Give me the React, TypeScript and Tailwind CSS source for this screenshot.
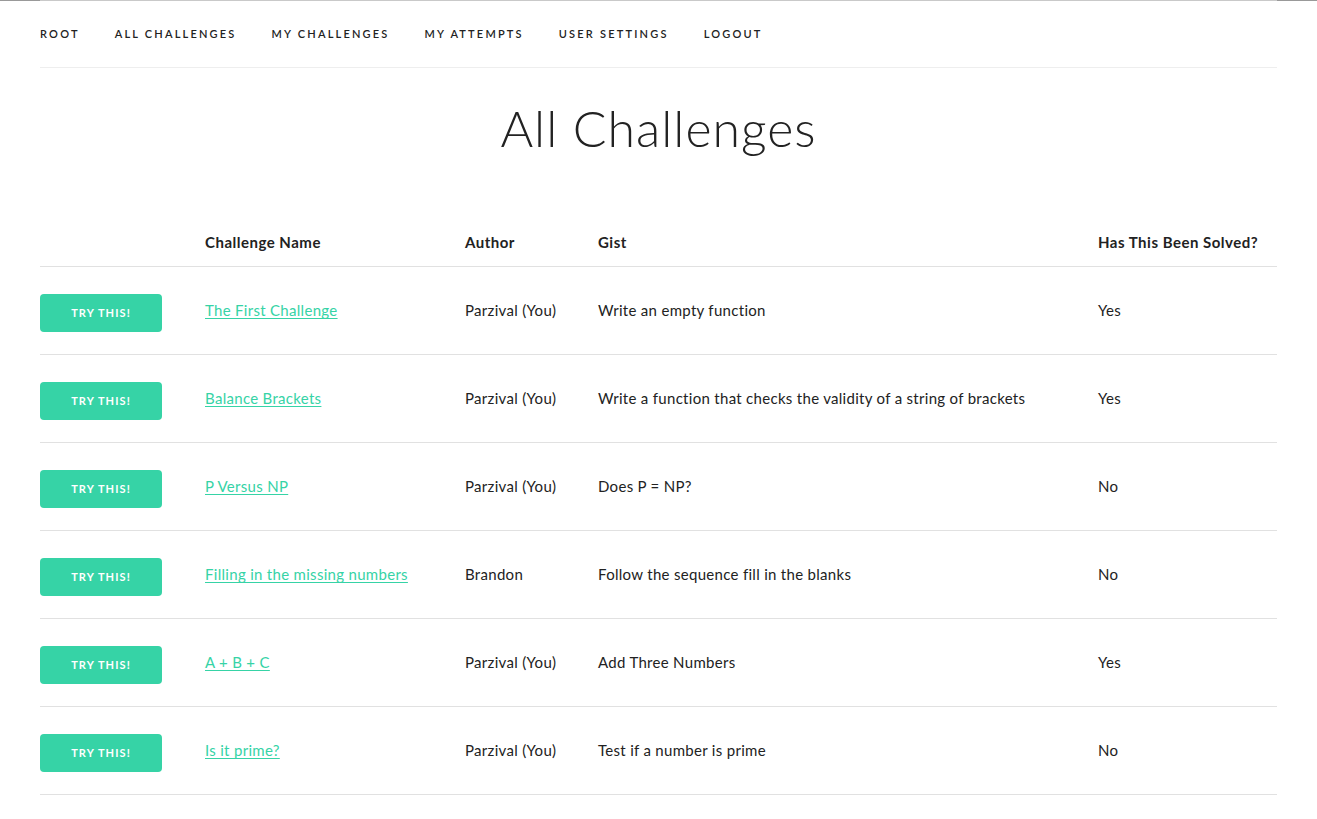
import React from 'react';

interface Challenge {
    id: number;
    name: string;
    author: string;
    gist: string;
    solved: boolean;
}

const challenges: Challenge[] = [
    { id: 1, name: 'The First Challenge', author: 'Parzival (You)', gist: 'Write an empty function', solved: true },
    { id: 2, name: 'Balance Brackets', author: 'Parzival (You)', gist: 'Write a function that checks the validity of a string of brackets', solved: true },
    { id: 3, name: 'P Versus NP', author: 'Parzival (You)', gist: 'Does P = NP?', solved: false },
    { id: 4, name: 'Filling in the missing numbers', author: 'Brandon', gist: 'Follow the sequence fill in the blanks', solved: false },
    { id: 5, name: 'A + B + C', author: 'Parzival (You)', gist: 'Add Three Numbers', solved: true },
    { id: 6, name: 'Is it prime?', author: 'Parzival (You)', gist: 'Test if a number is prime', solved: false },
];

const navLinks = ['Root', 'All Challenges', 'My Challenges', 'My Attempts', 'User Settings', 'Logout'];

const gridCols = 'grid grid-cols-[150px_260px_133px_500px_1fr]';

const App: React.FC = () => {
    return (
        <div className="min-h-[819px] bg-white text-[#222] font-['Lato','Liberation_Sans',sans-serif]">
            <div className="flex h-px">
                <div className="w-[40px] bg-[#999]" />
                <div className="flex-1 bg-[#c9c9c9]" />
                <div className="w-[40px] bg-[#999]" />
            </div>

            <div className="px-[40px]">
                <nav className="flex h-[67px] items-center gap-[35px] border-b border-[#eee]">
                    {navLinks.map((link) => (
                        <a key={link} href="#" className="text-[11px] font-semibold uppercase tracking-[0.2em] text-[#222]">
                            {link}
                        </a>
                    ))}
                </nav>

                <h1 className="pt-[30px] pb-[60px] text-center text-[50px] font-light leading-[60px] tracking-[1px]">
                    All Challenges
                </h1>

                <div>
                    <div className={`${gridCols} h-[49px] items-center border-b border-[#e1e1e1] text-[15px] font-bold tracking-[0.5px]`}>
                        <div />
                        <div className="pl-[15px]">Challenge Name</div>
                        <div className="pl-[15px]">Author</div>
                        <div className="pl-[15px]">Gist</div>
                        <div className="pl-[15px]">Has This Been Solved?</div>
                    </div>
                    {challenges.map((c) => (
                        <div key={c.id} className={`${gridCols} h-[88px] items-center border-b border-[#e1e1e1] text-[15px] tracking-[0.3px]`}>
                            <div>
                                <button className="mt-[5px] h-[38px] w-[122px] rounded-[4px] bg-[#36d3a6] text-[11px] font-bold uppercase tracking-[0.1em] text-white">
                                    Try This!
                                </button>
                            </div>
                            <div className="pl-[15px]">
                                <a href="#" className="text-[#36d3a6] underline underline-offset-2">{c.name}</a>
                            </div>
                            <div className="pl-[15px]">{c.author}</div>
                            <div className="pl-[15px]">{c.gist}</div>
                            <div className="pl-[15px]">{c.solved ? 'Yes' : 'No'}</div>
                        </div>
                    ))}
                </div>
            </div>
        </div>
    );
};

export default App;
